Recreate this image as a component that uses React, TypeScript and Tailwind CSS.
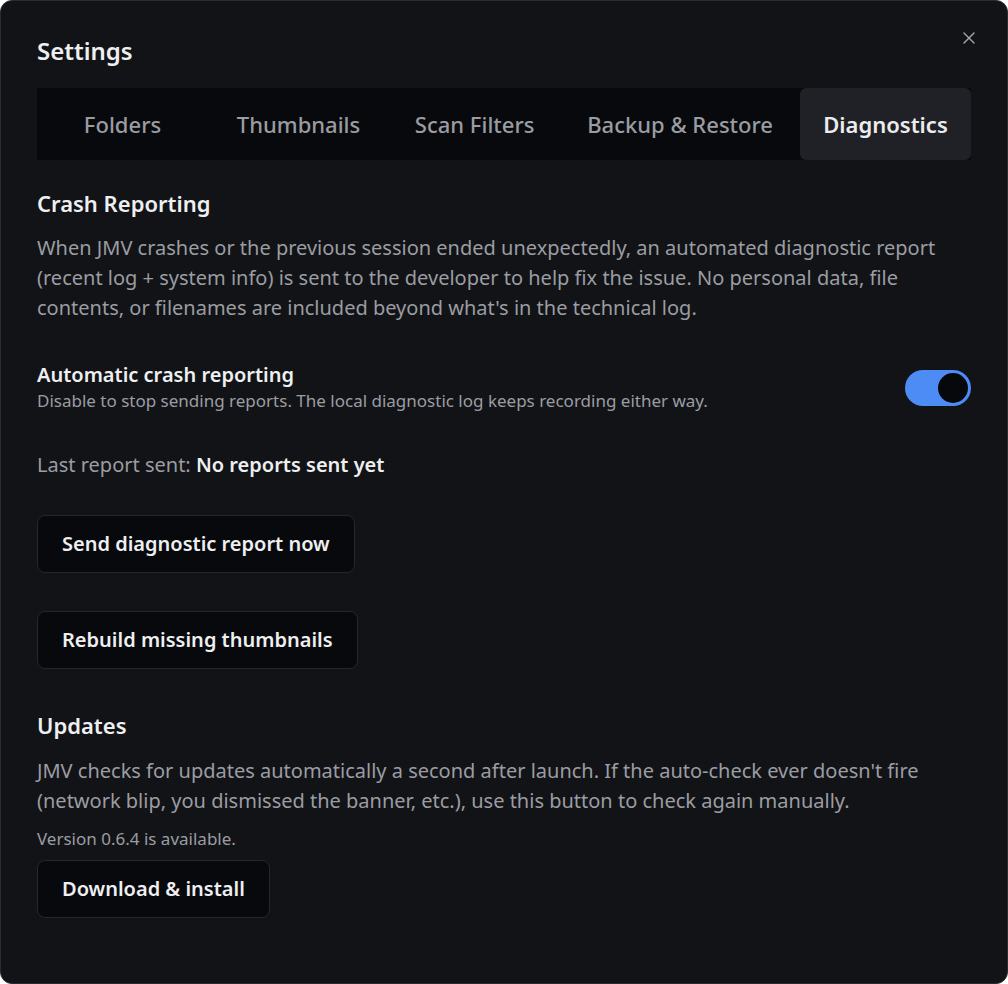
import { useState } from "react";
import { X } from "lucide-react";

const tabs = ["Folders", "Thumbnails", "Scan Filters", "Backup & Restore", "Diagnostics"];

export default function App() {
  const [active, setActive] = useState("Diagnostics");
  const [autoReport, setAutoReport] = useState(true);

  return (
    <div className="min-h-screen bg-white" style={{ fontFamily: '"Noto Sans", "Open Sans", sans-serif' }}>
      <div className="relative w-[1008px] h-[984px] bg-[#121317] border border-[#2b2c31] rounded-[12px] px-[36px] pt-[33px] text-[#e6e7e9]">
        {/* Close */}
        <button className="absolute top-[27px] right-[28px] text-[#a3a5aa]">
          <X className="w-[20px] h-[20px]" strokeWidth={1.6} />
        </button>

        <h1 className="text-[24px] leading-[34px] font-semibold text-[#eeeff1]">Settings</h1>

        {/* Tabs */}
        <div className="mt-[20px] flex justify-between bg-[#08090c] h-[72px]">
          {tabs.map((t) => (
            <button
              key={t}
              onClick={() => setActive(t)}
              className={
                "min-w-[171px] px-[22px] h-full rounded-[6px] text-[22px] font-medium " +
                (active === t ? "bg-[#1f2126] text-[#ececee] font-semibold" : "text-[#9a9ca1]")
              }
            >
              {t}
            </button>
          ))}
        </div>

        {/* Crash reporting */}
        <h2 className="mt-[27px] text-[22px] leading-[32px] font-semibold text-[#eeeff1]">Crash Reporting</h2>
        <p className="mt-[14px] text-[20px] leading-[30px] text-[#9b9da2]">
          When JMV crashes or the previous session ended unexpectedly, an automated diagnostic report (recent log +
          system info) is sent to the developer to help fix the issue. No personal data, file contents, or filenames
          are included beyond what's in the technical log.
        </p>

        <div className="mt-[39px] flex items-center justify-between">
          <div>
            <div className="text-[20px] leading-[26px] font-semibold text-[#eeeff1]">Automatic crash reporting</div>
            <div className="mt-[1px] text-[17px] leading-[24px] text-[#9b9da2]">
              Disable to stop sending reports. The local diagnostic log keeps recording either way.
            </div>
          </div>
          <button
            onClick={() => setAutoReport(!autoReport)}
            className={
              "w-[66px] h-[36px] rounded-full p-[3px] flex items-center " +
              (autoReport ? "bg-[#4d8cf5] justify-end" : "bg-[#3a3c42] justify-start")
            }
          >
            <span className="w-[30px] h-[30px] rounded-full bg-[#07080b]" />
          </button>
        </div>

        <div className="mt-[37px] text-[20px] leading-[30px] text-[#9b9da2]">
          Last report sent: <span className="font-semibold text-[#eeeff1]">No reports sent yet</span>
        </div>

        <div className="mt-[35px] flex flex-col items-start gap-[38px]">
          <button className="h-[58px] px-[24px] rounded-[8px] border border-[#26272c] bg-[#08090c] text-[20px] font-semibold text-[#eeeff1]">
            Send diagnostic report now
          </button>
          <button className="h-[58px] px-[24px] rounded-[8px] border border-[#26272c] bg-[#08090c] text-[20px] font-semibold text-[#eeeff1]">
            Rebuild missing thumbnails
          </button>
        </div>

        {/* Updates */}
        <h2 className="mt-[40px] text-[22px] leading-[32px] font-semibold text-[#eeeff1]">Updates</h2>
        <p className="mt-[15px] text-[20px] leading-[30px] text-[#9b9da2]">
          JMV checks for updates automatically a second after launch. If the auto-check ever doesn't fire (network
          blip, you dismissed the banner, etc.), use this button to check again manually.
        </p>
        <div className="mt-[11px] text-[17px] leading-[24px] text-[#9b9da2]">Version 0.6.4 is available.</div>
        <button className="mt-[9px] h-[58px] px-[24px] rounded-[8px] border border-[#26272c] bg-[#08090c] text-[20px] font-semibold text-[#eeeff1]">
          Download &amp; install
        </button>
      </div>
    </div>
  );
}
